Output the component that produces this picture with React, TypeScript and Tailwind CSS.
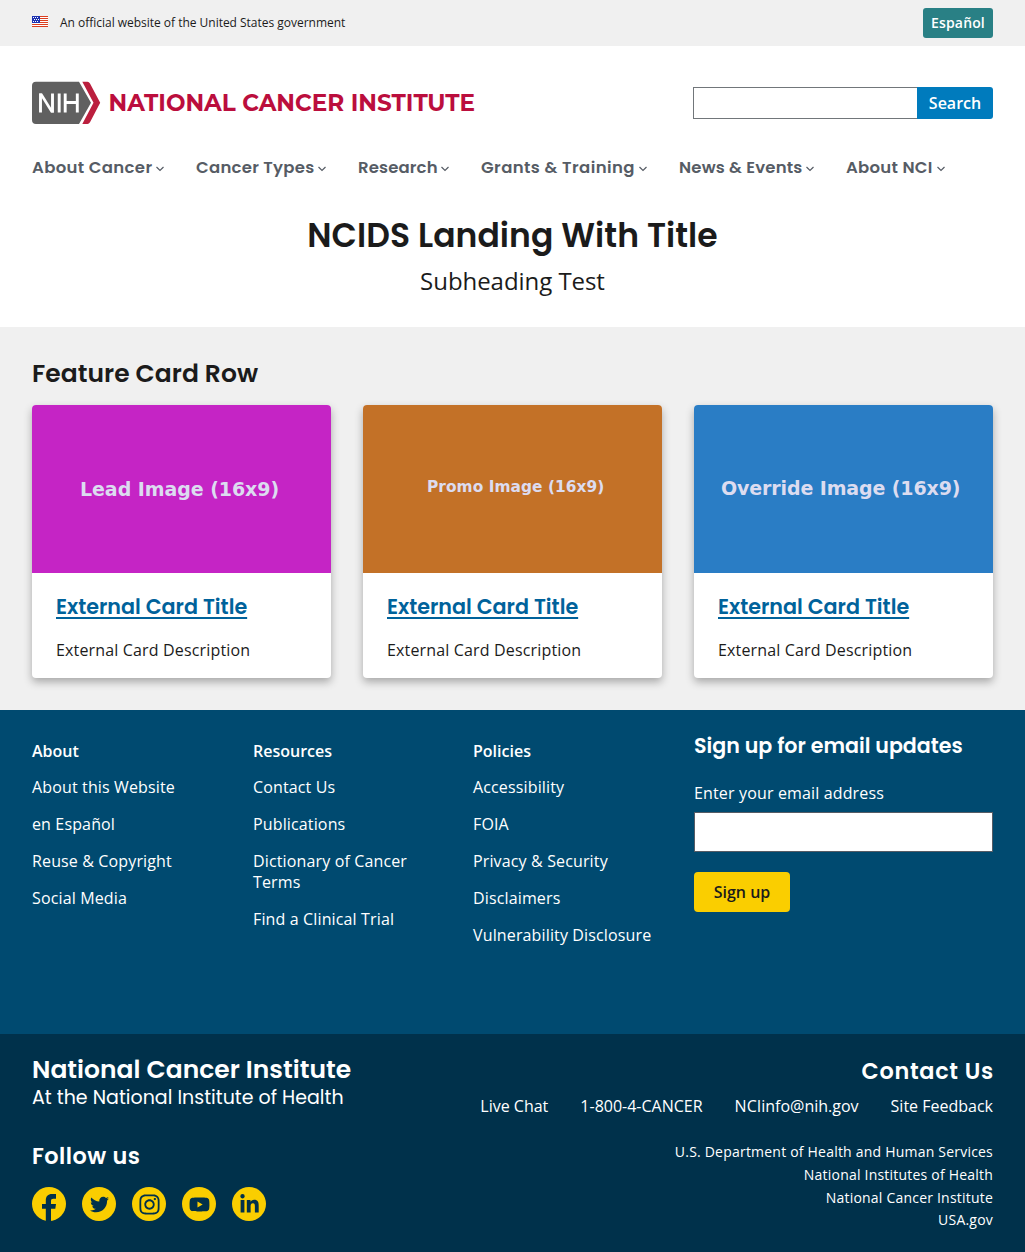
import React from "react";
import { FaInstagram, FaLinkedinIn, FaTwitter, FaYoutube } from "react-icons/fa";

const nav = [
  { label: "About Cancer", box: "w-[132px]", spacing: "tracking-[0.34px]" },
  { label: "Cancer Types", box: "w-[130px]", spacing: "tracking-[0.26px]" },
  { label: "Research", box: "w-[91px]", spacing: "tracking-[0.13px]" },
  { label: "Grants & Training", box: "w-[166px]", spacing: "tracking-[0.4px]" },
  { label: "News & Events", box: "w-[135px]", spacing: "tracking-[0.19px]" },
  { label: "About NCI", box: "w-[99px]", spacing: "tracking-[0.27px]" },
];

const cards = [
  { image: "Lead Image (16x9)", color: "bg-[#c524c5]", text: "text-[19px] pl-[48px] pt-[72px] tracking-[-0.06px]" },
  { image: "Promo Image (16x9)", color: "bg-[#c37127]", text: "text-[15.4px] pl-[64px] pt-[70px] tracking-[0.05px]" },
  { image: "Override Image (16x9)", color: "bg-[#2a7dc5]", text: "text-[19px] pl-[27px] pt-[71px] tracking-[-0.12px]" },
];

const columns = [
  { title: "About", box: "w-[221px]", links: ["About this Website", "en Español", "Reuse & Copyright", "Social Media"] },
  { title: "Resources", box: "w-[220px]", links: ["Contact Us", "Publications", "Dictionary of Cancer Terms", "Find a Clinical Trial"] },
  { title: "Policies", box: "w-[221px]", links: ["Accessibility", "FOIA", "Privacy & Security", "Disclaimers", "Vulnerability Disclosure"] },
];

const display = "font-['Poppins','Inter',sans-serif]";

function Flag() {
  return (
    <svg className="block" width="16" height="11" viewBox="0 0 16 11">
      <rect width="16" height="11" fill="#fff" />
      {[0, 2, 4, 6, 8, 10].map((y) => (
        <rect key={y} y={y} width="16" height="1" fill="#db3e1f" />
      ))}
      <rect width="8" height="7" fill="#1e33b1" />
      {[[1, 1], [3, 1], [5, 1], [2, 3], [4, 3], [6, 3], [1, 5], [3, 5], [5, 5]].map(([x, y]) => (
        <rect key={`${x}-${y}`} x={x} y={y} width="1" height="1" fill="#fff" />
      ))}
    </svg>
  );
}

function Logo() {
  return (
    <svg width="444" height="44" viewBox="0 0 444 44" role="img" aria-label="National Cancer Institute">
      <path d="M4 .7H47L59 21.7 47 43H4a4 4 0 0 1-4-4V4.700a4 4 0 0 1 4-4Z" fill="#606060" />
      <path d="M50.300 .7H55.500Q57 .7 58 2.400L68.200 21.800 58 41.300Q57 43 55.500 43H50.300L61.500 21.800Z" fill="#bb1f3e" />
      <g fill="none" stroke="#fff" strokeWidth="2.900">
        <path d="M8.500 31.500V12.500M20.500 12.500V31.500M27.200 12.500V31.500M33.200 12.500V31.500M45.300 12.500V31.500M33.200 21.500H45.300" />
        <path d="M7.050 12.500H10.200L21.950 31.500H18.800Z" fill="#fff" stroke="none" />
      </g>
      <text x="76.500" y="29.500" textLength="366.500" lengthAdjust="spacingAndGlyphs" fill="#bb0e3d" className="font-['Montserrat','Inter',sans-serif] text-[23px] font-bold">
        NATIONAL CANCER INSTITUTE
      </text>
    </svg>
  );
}

function Chevron() {
  return (
    <svg width="8" height="6" viewBox="0 0 8 6" className="mt-px shrink-0" fill="none" stroke="#565c65" strokeWidth="1.200">
      <path d="M.5 1 4 4.500 7.500 1" />
    </svg>
  );
}

function Disc({ children }: { children: React.ReactNode }) {
  return (
    <a href="#" className="flex size-[34px] items-center justify-center rounded-full bg-[#face00] text-[#00314b]">
      {children}
    </a>
  );
}

export default function App() {
  return (
    <div className="h-[1252px] w-[1025px] overflow-hidden bg-white font-['Open_Sans',sans-serif] text-base text-[#1b1b1b]">
      <div className="flex h-[46px] items-center justify-between bg-[#f0f0f0] px-8">
        <div className="flex h-full items-start gap-3 text-xs">
          <span className="mt-4"><Flag /></span>
          <span className="mt-[15px] tracking-[-0.02px]">An official website of the United States government</span>
        </div>
        <a href="#" className="flex h-[30px] w-[70px] items-center justify-center rounded-[3px] bg-[#298085] text-sm font-semibold tracking-[0.15px] text-white">Español</a>
      </div>

      <header>
        <div className="flex items-start justify-between px-8 pt-[35px]">
          <Logo />
          <form className="mt-1.5 flex h-8" onSubmit={(e) => e.preventDefault()}>
            <input aria-label="Search" className="w-[224px] border border-r-0 border-[#71767a] bg-white px-2 outline-none" />
            <button className="w-[76px] rounded-r-[3px] bg-[#007bbd] font-semibold text-white">Search</button>
          </form>
        </div>
        <nav className={`mt-[33px] flex h-[21px] gap-8 px-8 text-[16.5px] font-semibold text-[#565c65] ${display}`}>
          {nav.map((n) => (
            <a key={n.label} href="#" className={`flex shrink-0 items-center justify-between whitespace-nowrap ${n.box} ${n.spacing}`}>
              {n.label}
              <Chevron />
            </a>
          ))}
        </nav>
      </header>

      <section className="flex h-[148px] flex-col items-center pt-[34px]">
        <h1 className={`h-[46px] text-[33px] leading-[46px] font-semibold tracking-[0.05px] whitespace-nowrap ${display}`}>NCIDS Landing With Title</h1>
        <p className="mt-[6px] text-2xl leading-8 tracking-[-0.05px]">Subheading Test</p>
      </section>

      <section className="h-[383px] bg-[#f0f0f0] px-8 pt-[31px]">
        <h2 className={`h-[47px] text-[25px] leading-8 font-semibold tracking-[0.03px] whitespace-nowrap ${display}`}>Feature Card Row</h2>
        <div className="grid grid-cols-3 gap-8">
          {cards.map((c) => (
            <a key={c.image} href="#" className="h-[273px] overflow-hidden rounded-[4px] bg-white shadow-[0_4px_8px_rgba(0,0,0,0.3)]">
              <div className={`h-[168px] font-['DejaVu_Sans',sans-serif] leading-6 font-bold whitespace-nowrap text-[#dcdcf0] ${c.color} ${c.text}`}>{c.image}</div>
              <div className="px-6 pt-[19px]">
                <h3 className={`text-[20.7px] leading-[30px] font-semibold whitespace-nowrap text-[#00629b] underline decoration-2 underline-offset-[3px] ${display}`}>External Card Title</h3>
                <p className="mt-[15px] leading-[26px] tracking-[0.16px]">External Card Description</p>
              </div>
            </a>
          ))}
        </div>
      </section>

      <section className="flex h-[324px] bg-[#004a70] px-8 text-white">
        {columns.map((c) => (
          <div key={c.title} className={`pt-[31px] ${c.box}`}>
            <h3 className="leading-[21px] font-semibold">{c.title}</h3>
            <ul className="mt-[15px] flex flex-col gap-4 leading-[21px] tracking-[0.14px]">
              {c.links.map((l) => (
                <li key={l} className="max-w-[190px]"><a href="#">{l}</a></li>
              ))}
            </ul>
          </div>
        ))}
        <form className="w-[299px] pt-[21px]" onSubmit={(e) => e.preventDefault()}>
          <h3 className={`text-[20.6px] leading-[30px] font-semibold whitespace-nowrap ${display}`}>Sign up for email updates</h3>
          <label htmlFor="email" className="mt-[21px] block leading-[22px] tracking-[0.15px]">Enter your email address</label>
          <input id="email" className="mt-2 block h-10 w-full border border-[#565c65] bg-white px-2 outline-none" />
          <button className="mt-5 h-10 w-24 rounded-[4px] bg-[#face00] font-semibold text-[#1b1b1b]">Sign up</button>
        </form>
      </section>

      <footer className="flex h-[218px] justify-between bg-[#00314b] px-8 text-white">
        <div>
          <p className={`mt-[21px] text-[25px] leading-[30px] font-semibold tracking-[0.02px] whitespace-nowrap ${display}`}>National Cancer Institute</p>
          <p className={`text-[19px] leading-[26px] whitespace-nowrap ${display}`}>At the National Institute of Health</p>
          <h3 className={`mt-[30px] text-[22.4px] leading-[30px] font-semibold tracking-[0.48px] whitespace-nowrap ${display}`}>Follow us</h3>
          <div className="mt-4 flex gap-4">
            <Disc>
              <svg width="34" height="34" viewBox="0 0 34 34" fill="currentColor">
                <path d="M13.800 34V21.700H10V17H13.800V13.500C13.800 9.200 16 7 20 7H24V11.700H21.300C19.700 11.700 19 12.400 19 14V17H24L23.300 21.700H19V34Z" />
              </svg>
            </Disc>
            <Disc><FaTwitter size={19} /></Disc>
            <Disc><FaInstagram size={23} /></Disc>
            <Disc><FaYoutube size={21} /></Disc>
            <Disc><FaLinkedinIn size={21} /></Disc>
          </div>
        </div>
        <div className="flex flex-col items-end">
          <h3 className={`mt-[22px] -mr-px text-[22.4px] leading-[30px] font-semibold tracking-[0.7px] whitespace-nowrap ${display}`}>Contact Us</h3>
          <div className="mt-[9px] flex gap-8 leading-[22px]">
            <a href="#">Live Chat</a>
            <a href="#">1-800-4-CANCER</a>
            <a href="#">NCIinfo@nih.gov</a>
            <a href="#">Site Feedback</a>
          </div>
          <div className="mt-6 flex flex-col items-end text-sm leading-[22.800px] tracking-[0.21px]">
            <a href="#">U.S. Department of Health and Human Services</a>
            <a href="#">National Institutes of Health</a>
            <a href="#">National Cancer Institute</a>
            <a href="#">USA.gov</a>
          </div>
        </div>
      </footer>
    </div>
  );
}
